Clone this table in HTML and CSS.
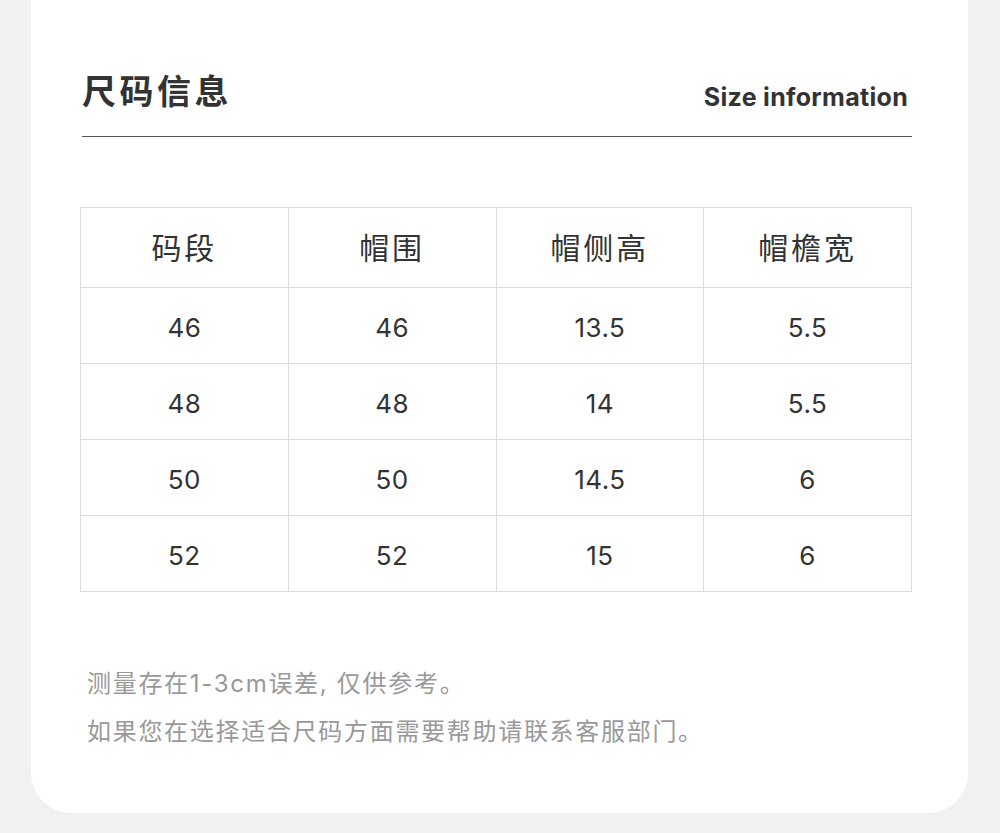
FILE: index.html
```html
<!DOCTYPE html>
<html lang="zh">
<head>
<meta charset="utf-8">
<link rel="stylesheet" href="styles.css">
</head>
<body>
<div class="card">
  <div class="header">
    <h1 class="title">尺码信息</h1>
    <span class="subtitle">Size information</span>
  </div>
  <table class="size-table">
    <thead>
      <tr><th>码段</th><th>帽围</th><th>帽侧高</th><th>帽檐宽</th></tr>
    </thead>
    <tbody>
      <tr><td>46</td><td>46</td><td>13.5</td><td>5.5</td></tr>
      <tr><td>48</td><td>48</td><td>14</td><td>5.5</td></tr>
      <tr><td>50</td><td>50</td><td>14.5</td><td>6</td></tr>
      <tr><td>52</td><td>52</td><td>15</td><td>6</td></tr>
    </tbody>
  </table>
  <div class="notes">
    <p>测量存在1-3cm误差, 仅供参考。</p>
    <p>如果您在选择适合尺码方面需要帮助请联系客服部门。</p>
  </div>
</div>
</body>
</html>
```

FILE: styles.css
```css
html, body {
  margin: 0;
  padding: 0;
  background: #f1f1f1;
}
body {
  font-family: "Inter", "Noto Sans CJK SC", sans-serif;
  color: #333;
}
.card {
  margin: 0 32px 0 31px;
  height: 813px;
  box-sizing: border-box;
  background: #fff;
  border-radius: 0 0 40px 40px;
  padding: 70px 56px 0 49px;
}
.header {
  display: flex;
  justify-content: space-between;
  align-items: flex-end;
  margin-left: 2px;
  padding-bottom: 26px;
  border-bottom: 1px solid #555;
}
.title {
  margin: 0;
  font-family: "Noto Sans CJK SC", sans-serif;
  font-size: 34px;
  line-height: 40px;
  font-weight: 700;
  letter-spacing: 3.5px;
  color: #333;
}
.subtitle {
  font-family: "Inter", "Noto Sans", sans-serif;
  font-weight: 700;
  font-size: 25px;
  line-height: 25px;
  letter-spacing: 0.3px;
  padding-bottom: 0;
  padding-right: 4px;
  color: #333;
}
.size-table {
  margin-top: 70px;
  width: 832px;
  border-collapse: collapse;
  table-layout: fixed;
}
.size-table th,
.size-table td {
  border: 1px solid #dcdcdc;
  text-align: center;
  padding: 0;
  color: #333;
}
.size-table th {
  height: 80px;
  padding-bottom: 4px;
  box-sizing: border-box;
  font-family: "Noto Sans CJK SC", sans-serif;
  font-size: 30px;
  font-weight: 400;
  letter-spacing: 3px;
}
.size-table td {
  height: 76px;
  box-sizing: border-box;
  padding-top: 3px;
  font-size: 26px;
  letter-spacing: 0.5px;
}
.notes {
  margin-top: 68px;
  padding-left: 7px;
}
.notes p {
  margin: 0;
  font-size: 24px;
  line-height: 48px;
  color: #999;
  letter-spacing: 1.7px;
}
```
